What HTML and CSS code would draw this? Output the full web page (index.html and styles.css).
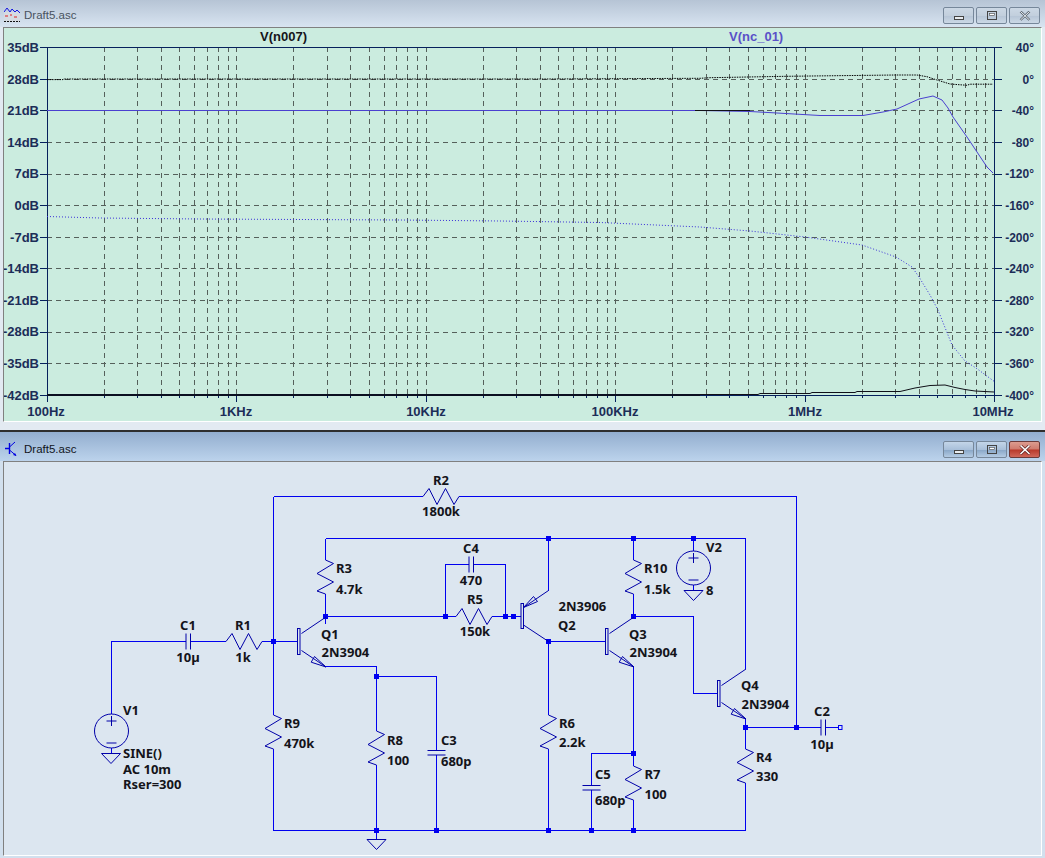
FILE: index.html
```html
<!DOCTYPE html>
<html lang="en">
<head>
  <meta charset="UTF-8" />
  <title>Draft5.asc</title>
  <link rel="stylesheet" href="styles.css" />
</head>
<body>
  <!-- janela do grafico -->
  <section class="window window-plot">
    <header class="titlebar">
      <svg class="title-icon" width="16" height="16" viewBox="0 0 16 16">
        <rect x="0" y="5" width="16" height="10" fill="#d5dbe2" />
        <path d="M0 5l3-4 3 4 2-3 3 3 2-2 3 3" fill="none" stroke="#1414e0" />
        <path d="M1 9h3M6 8h2M10 10h3" stroke="#e02020" />
        <path d="M0 14.5h16" stroke="#111" stroke-dasharray="2 1" />
      </svg>
      <span class="title-text">Draft5.asc</span>
      <div class="win-buttons">
        <button class="win-btn" type="button"><svg width="12" height="10" viewBox="0 0 12 10"><rect x="1.5" y="5.5" width="9" height="3" fill="#e8ecf0" stroke="#444" /></svg></button>
        <button class="win-btn" type="button"><svg width="12" height="10" viewBox="0 0 12 10"><rect x="1.5" y="0.5" width="9" height="8" fill="none" stroke="#444" /><rect x="3.5" y="2.5" width="5" height="2" fill="#fff" stroke="#444" stroke-width="0.6" /></svg></button>
        <button class="win-btn" type="button"><svg width="12" height="10" viewBox="0 0 12 10"><path d="M1.5 0.5l9 8.5M10.5 0.5l-9 8.5" stroke="#5a6470" stroke-width="2.4" /><path d="M1.5 0.5l9 8.5M10.5 0.5l-9 8.5" stroke="#eef1f4" stroke-width="1" /></svg></button>
      </div>
    </header>
    <div class="pane pane-plot">
      <svg class="canvas" width="1037" height="393" viewBox="4 28 1037 393">
        <!-- grade: 5 decadas em log, 11 divisoes horizontais -->
        <path class="grid" d="M104 47V395M137 47V395M161 47V395M179 47V395M194 47V395M207 47V395M218 47V395M228 47V395
          M293 47V395M327 47V395M350 47V395M369 47V395M384 47V395M396 47V395M407 47V395M417 47V395
          M483 47V395M516 47V395M540 47V395M558 47V395M573 47V395M586 47V395M597 47V395M607 47V395
          M672 47V395M706 47V395M729 47V395M748 47V395M763 47V395M775 47V395M786 47V395M796 47V395
          M862 47V395M895 47V395M919 47V395M937 47V395M952 47V395M965 47V395M976 47V395M985 47V395" transform="translate(.5 0)" />
        <path class="grid" d="M236.5 47V395M426.5 47V395M615.5 47V395M805.5 47V395" />
        <path class="grid" d="M47 79.5H995M47 110.5H995M47 142.5H995M47 174.5H995M47 205.5H995M47 237.5H995M47 268.5H995M47 300.5H995M47 332.5H995M47 363.5H995" />

        <!-- eixos e marcas -->
        <path class="axis" d="M40 47.5H1002M47.5 47V395.5M994.5 47V395.5M40 395.5H1002
          M40 79.5h7M40 110.5h7M40 142.5h7M40 174.5h7M40 205.5h7M40 237.5h7M40 268.5h7M40 300.5h7M40 332.5h7M40 363.5h7
          M995 79.5h7M995 110.5h7M995 142.5h7M995 174.5h7M995 205.5h7M995 237.5h7M995 268.5h7M995 300.5h7M995 332.5h7M995 363.5h7
          M47.5 395v7M236.5 395v7M426.5 395v7M615.5 395v7M805.5 395v7M994.5 395v7" />
        <path class="axis" d="M104.5 395v3M137.5 395v3M161.5 395v3M179.5 395v3M194.5 395v3M207.5 395v3M218.5 395v3M228.5 395v3
          M293.5 395v3M327.5 395v3M350.5 395v3M369.5 395v3M384.5 395v3M396.5 395v3M407.5 395v3M417.5 395v3
          M483.5 395v3M516.5 395v3M540.5 395v3M558.5 395v3M573.5 395v3M586.5 395v3M597.5 395v3M607.5 395v3
          M672.5 395v3M706.5 395v3M729.5 395v3M748.5 395v3M763.5 395v3M775.5 395v3M786.5 395v3M796.5 395v3
          M862.5 395v3M895.5 395v3M919.5 395v3M937.5 395v3M952.5 395v3M965.5 395v3M976.5 395v3M985.5 395v3" />

        <!-- curvas -->
        <path class="trace-dot-black" d="M47 79.6H63L64 79H550L700 78.3L710 77.7L786 76.3L896 75L917 75L927 76.7L937 80L950 84L967 85.3L970 84.2L993 84.2" />
        <path class="trace-blue" d="M47 110.5H700L750 111.5L777 113L820 115.5L863 115.5L883 112L897 109L919 99L933 96L942 100L948 108L953 117L967 137L987 167L993 173" />
        <path class="trace-black" d="M695 110.5H750" />
        <path class="trace-dot-blue" d="M47 216.5L100 218L200 219L300 219.5L400 220L500 221L600 222.5L700 227L750 231L805 237L862 245L896 257L912 267L919 277L930 295L938 310L952 345L965 361L976 368L995 382" />
        <path class="trace-mag" d="M47 395H700" />
        <path class="trace-black" d="M700 394.5H758L760 393.5H810L812 392.5H855L857 391.5H900L915 388L930 385.5L945 385L955 387.5L965 389.5L975 391L994 392" />

        <text class="trace-label" x="260" y="41">V(n007)</text>
        <text class="trace-label trace-label-blue" x="729" y="41">V(nc_01)</text>

        <g class="ylabels">
          <text x="39" y="52">35dB</text>
          <text x="39" y="84">28dB</text>
          <text x="39" y="115">21dB</text>
          <text x="39" y="147">14dB</text>
          <text x="39" y="178">7dB</text>
          <text x="39" y="210">0dB</text>
          <text x="39" y="242">-7dB</text>
          <text x="39" y="273">-14dB</text>
          <text x="39" y="305">-21dB</text>
          <text x="39" y="336">-28dB</text>
          <text x="39" y="368">-35dB</text>
          <text x="39" y="400">-42dB</text>
        </g>
        <g class="rlabels">
          <text x="1034" y="52">40°</text>
          <text x="1034" y="84">0°</text>
          <text x="1034" y="115">-40°</text>
          <text x="1034" y="147">-80°</text>
          <text x="1034" y="178">-120°</text>
          <text x="1034" y="210">-160°</text>
          <text x="1034" y="242">-200°</text>
          <text x="1034" y="273">-240°</text>
          <text x="1034" y="305">-280°</text>
          <text x="1034" y="336">-320°</text>
          <text x="1034" y="368">-360°</text>
          <text x="1034" y="400">-400°</text>
        </g>
        <g class="xlabels">
          <text x="46" y="416">100Hz</text>
          <text x="236" y="416">1KHz</text>
          <text x="426" y="416">10KHz</text>
          <text x="615" y="416">100KHz</text>
          <text x="805" y="416">1MHz</text>
          <text x="993" y="416">10MHz</text>
        </g>
      </svg>
    </div>
  </section>

  <!-- janela do esquematico -->
  <section class="window window-schematic">
    <header class="titlebar">
      <svg class="title-icon" width="16" height="16" viewBox="0 0 16 16">
        <path d="M1 7.5h4M5.5 2v11" stroke="#0000e0" stroke-width="1.4" fill="none" />
        <path d="M5.5 6L11 1M5.5 9L12 14.5" stroke="#0000e0" fill="none" />
        <path d="M12.5 15L9 14l2-2z" fill="#0000e0" />
      </svg>
      <span class="title-text title-text-active">Draft5.asc</span>
      <div class="win-buttons">
        <button class="win-btn win-btn-active" type="button"><svg width="12" height="10" viewBox="0 0 12 10"><rect x="1.5" y="5.5" width="9" height="3" fill="#e8ecf0" stroke="#444" /></svg></button>
        <button class="win-btn win-btn-active" type="button"><svg width="12" height="10" viewBox="0 0 12 10"><rect x="1.5" y="0.5" width="9" height="8" fill="none" stroke="#444" /><rect x="3.5" y="2.5" width="5" height="2" fill="#fff" stroke="#444" stroke-width="0.6" /></svg></button>
        <button class="win-btn win-btn-close" type="button"><svg width="12" height="10" viewBox="0 0 12 10"><path d="M1.5 0.5l9 8.5M10.5 0.5l-9 8.5" stroke="#5a2020" stroke-width="3" /><path d="M1.5 0.5l9 8.5M10.5 0.5l-9 8.5" stroke="#fff" stroke-width="1.6" /></svg></button>
      </div>
    </header>
    <div class="pane pane-schematic">
      <svg class="canvas" width="1037" height="393" viewBox="4 462 1037 393">
        <defs>
          <path id="res-v" d="M0 0L8 3.5L-8.5 13.5L8 22L-8.5 31L0 34" />
          <path id="res-h" d="M0 0L6 -8L14 8L22.500 -8L31 8L36 0" />
          <g id="npn">
            <rect x="0" y="-13" width="2.500" height="26" />
            <path d="M4 -8L28.500 -24.500M4 9L28.500 25.500" />
            <path d="M28.500 25.500L17 15L13.700 20.700Z" />
          </g>
          <path id="ground" d="M-9.500 0H9.500L0 10Z" />
          <path id="cap-h" d="M0 -8V8M4.500 -8V8" />
          <path id="cap-v" d="M-9 0H9M-9 4.500H9" />
          <g id="source">
            <circle cx="0" cy="0" r="17" />
            <path d="M-5 -10H5M0 -15V-5M-5 12H5" />
          </g>
        </defs>

        <!-- fios -->
        <path class="wire" d="M273.5 496.5V715M273.5 749V830.5H745.5V783M273.5 496.5H423M459 496.5H796.5V727.5
          M745.5 719V749M745.5 727.5H821M825 727.5H838
          M111.500 714V641.5H186M190.5 641.5H226M262 641.5H297
          M325.5 538.5V560M325.5 594V624M325.5 538.5H745.5V669M325.5 616.5H456M492 616.5H521
          M445.5 616.5V564.5H469M473.5 564.5H505.5V616.5
          M325.5 666.5H376.5V731M376.5 765V839M376.5 676.5H436.5V750M436.5 755V830.5
          M548.5 590.5V538.5M548.5 641.5V715M548.5 749V830.5M548.5 641.5H606
          M633.5 538.5V560M633.5 594V616.5H693.5V693.5H717M633.5 667V766M633.5 800V830.5
          M633.5 753.5H591.5V785M591.5 790V830.5
          M693.5 538.5V551M693.5 585V590M111.5 748V753" />
        <path class="nodes" d="M271 639h5v5h-5zM323 614h5v5h-5zM374 674h5v5h-5zM443 614h5v5h-5zM503 614h5v5h-5zM511 614h5v5h-5z
          M546 536h5v5h-5zM631 536h5v5h-5zM691 536h5v5h-5zM546 639h5v5h-5zM631 614h5v5h-5zM631 751h5v5h-5z
          M743 725h5v5h-5zM794 725h5v5h-5zM374 828h5v5h-5zM434 828h5v5h-5zM546 828h5v5h-5zM589 828h5v5h-5zM631 828h5v5h-5z" />
        <rect class="port" x="838.5" y="725.5" width="3.500" height="4" />

        <!-- componentes -->
        <g class="part">
          <use href="#res-h" x="423" y="496.5" />
          <use href="#res-h" x="226" y="641.5" />
          <use href="#res-h" x="456" y="616.5" />
          <use href="#res-v" x="325.5" y="560" />
          <use href="#res-v" x="633.5" y="560" />
          <use href="#res-v" x="273.5" y="715" />
          <use href="#res-v" x="376.5" y="731" />
          <use href="#res-v" x="548.5" y="715" />
          <use href="#res-v" x="745.5" y="749" />
          <use href="#res-v" x="633.5" y="766" />

          <use href="#cap-h" x="186" y="641.5" />
          <use href="#cap-h" x="469" y="564.5" />
          <use href="#cap-h" x="821" y="727.5" />
          <use href="#cap-v" x="436.5" y="750.5" />
          <use href="#cap-v" x="591.5" y="785.5" />

          <use href="#npn" x="297.500" y="641.5" />
          <use href="#npn" x="605.5" y="641.5" />
          <use href="#npn" x="717.5" y="693.5" />

          <!-- Q2 e PNP, seta na base -->
          <rect x="521" y="603.5" width="2.500" height="25" />
          <path d="M523.500 607.500L548.5 590.5M523.500 625L548.5 641.5" />
          <path d="M523.500 607.500L533.500 596.500L537.500 601.500Z" />

          <use href="#source" x="111.5" y="731" />
          <use href="#source" x="693.5" y="568" />
          <use href="#ground" x="111" y="753.5" />
          <use href="#ground" x="693.5" y="590.5" />
          <use href="#ground" x="376.5" y="839.5" />
        </g>

        <!-- rotulos -->
        <g class="labels">
          <text class="mid" x="441" y="484.5">R2</text>
          <text class="mid" x="441" y="515.5">1800k</text>
          <text class="mid" x="188" y="630">C1</text>
          <text class="mid" x="188" y="662">10µ</text>
          <text class="mid" x="243" y="630">R1</text>
          <text class="mid" x="243" y="662">1k</text>
          <text x="321" y="638.5">Q1</text>
          <text x="321.5" y="657">2N3904</text>
          <text x="123" y="715">V1</text>
          <text x="123" y="758">SINE()</text>
          <text x="123" y="773.5">AC 10m</text>
          <text x="123" y="788.5">Rser=300</text>
          <text x="284" y="728">R9</text>
          <text x="284" y="747.5">470k</text>
          <text x="336" y="572.5">R3</text>
          <text x="336" y="593.5">4.7k</text>
          <text class="mid" x="471" y="553">C4</text>
          <text class="mid" x="471" y="585">470</text>
          <text class="mid" x="475" y="604">R5</text>
          <text class="mid" x="475" y="636">150k</text>
          <text x="558.5" y="610.5">2N3906</text>
          <text x="558" y="629.5">Q2</text>
          <text x="644" y="572.5">R10</text>
          <text x="644" y="593.5">1.5k</text>
          <text x="706" y="552">V2</text>
          <text x="706" y="595">8</text>
          <text x="629" y="638.5">Q3</text>
          <text x="629.5" y="657">2N3904</text>
          <text x="741" y="689.5">Q4</text>
          <text x="741.5" y="709">2N3904</text>
          <text class="mid" x="822" y="716">C2</text>
          <text class="mid" x="822" y="748.5">10µ</text>
          <text x="756" y="762">R4</text>
          <text x="756" y="781">330</text>
          <text x="387" y="744.5">R8</text>
          <text x="387" y="764.5">100</text>
          <text x="441" y="744.5">C3</text>
          <text x="441" y="765.5">680p</text>
          <text x="559" y="727.5">R6</text>
          <text x="559" y="747">2.2k</text>
          <text x="595" y="779">C5</text>
          <text x="595" y="805">680p</text>
          <text x="644.5" y="778.5">R7</text>
          <text x="644.5" y="799">100</text>
        </g>
      </svg>
    </div>
  </section>
</body>
</html>
```

FILE: styles.css
```css
/* Draft5.asc - duas janelas empilhadas */

body {
  margin: 0;
  width: 1045px;
  height: 858px;
  overflow: hidden;
  font-family: "Liberation Sans", Arial, sans-serif;
  background-color: #d0dfee;
}

/* =====================
  Janelas e barra de titulo
====================== */

.window {
  display: flex;
  flex-direction: column;
  padding: 0 3px;
}

.window-plot {
  padding-bottom: 8px;
  background-color: #e3eaf2;
  border-bottom: 2px solid #2e2e2e;
}

.window-schematic {
  padding-bottom: 2px;
  background-color: #d2e0ee;
}

.titlebar {
  display: flex;
  align-items: flex-end;
  margin: 0 -3px;
  padding: 0 5px 3px 4px;
  height: 24px;
  background: linear-gradient(to bottom, #b6c4d5, #d8e4f1);
}

.window-schematic .titlebar {
  height: 26px;
  background: linear-gradient(to bottom, #93aecf, #bcd3ec);
}

.title-icon {
  flex: none;
  margin-bottom: 1px;
}

.title-text {
  margin-left: 4px;
  font-size: 11.5px;
  line-height: 17px;
  color: #48525e;
}

.title-text-active {
  color: #10151c;
}

.win-buttons {
  display: flex;
  gap: 2px;
  margin-left: auto;
}

.win-btn {
  display: flex;
  align-items: center;
  justify-content: center;
  width: 31px;
  height: 17px;
  padding: 0;
  border: 1px solid #76879a;
  border-radius: 2px;
  background: linear-gradient(to bottom, #ccd8e5 0%, #c2cfdd 50%, #b6c5d6 52%, #cbd8e6 100%);
}

.win-btn-active {
  background: linear-gradient(to bottom, #c3d5e8 0%, #a9c0da 50%, #88a6c7 52%, #b4cbe3 100%);
}

.win-btn-close {
  border-color: #6b3a3a;
  background: linear-gradient(to bottom, #dc9c90 0%, #cf7a6d 48%, #b8382a 52%, #d0675a 100%);
}

/* =====================
  Areas internas
====================== */

.pane {
  height: 393px;
  border: 1px solid #808080;
  border-right-color: #fff;
  border-bottom-color: #fff;
}

.pane-plot {
  background-color: #cbecdf;
}

.pane-schematic {
  background-color: #dce6f0;
}

.canvas {
  display: block;
}

/* =====================
  Grafico
====================== */

.grid {
  fill: none;
  stroke: #55605b;
  stroke-width: 1;
  stroke-dasharray: 5 4;
  shape-rendering: crispEdges;
}

.axis {
  fill: none;
  stroke: #06205c;
  stroke-width: 1;
  shape-rendering: crispEdges;
}

.trace-blue {
  fill: none;
  stroke: #4a40d0;
  stroke-width: 1;
}

.trace-black {
  fill: none;
  stroke: #101018;
  stroke-width: 1;
}

.trace-mag {
  fill: none;
  stroke: #0a0f20;
  stroke-width: 2;
}

.trace-dot-black {
  fill: none;
  stroke: #000;
  stroke-width: 1;
  stroke-dasharray: 1.5 1;
}

.trace-dot-blue {
  fill: none;
  stroke: #3a30d8;
  stroke-width: 1;
  stroke-dasharray: 1 2;
}

.trace-label {
  font-size: 13px;
  font-weight: bold;
  fill: #15151a;
}

.trace-label-blue {
  fill: #5a50c8;
}

.ylabels text,
.xlabels text {
  font-size: 13px;
  font-weight: bold;
  fill: #1c2d58;
}

.ylabels text {
  text-anchor: end;
}

.xlabels text {
  text-anchor: middle;
}

.rlabels text {
  font-size: 12px;
  font-weight: bold;
  fill: #1c2d58;
  text-anchor: end;
}

/* =====================
  Esquematico
====================== */

.wire {
  fill: none;
  stroke: #0000f0;
  stroke-width: 1;
  shape-rendering: crispEdges;
}

.nodes {
  fill: #0000f0;
  shape-rendering: crispEdges;
}

.port {
  fill: none;
  stroke: #0000f0;
  stroke-width: 1;
}

.part {
  fill: none;
  stroke: #0000a8;
  stroke-width: 1;
}

.labels text {
  font-family: "Noto Sans", "Open Sans", sans-serif;
  font-size: 13px;
  font-weight: 700;
  fill: #14141a;
}

.labels .mid {
  text-anchor: middle;
}
```
